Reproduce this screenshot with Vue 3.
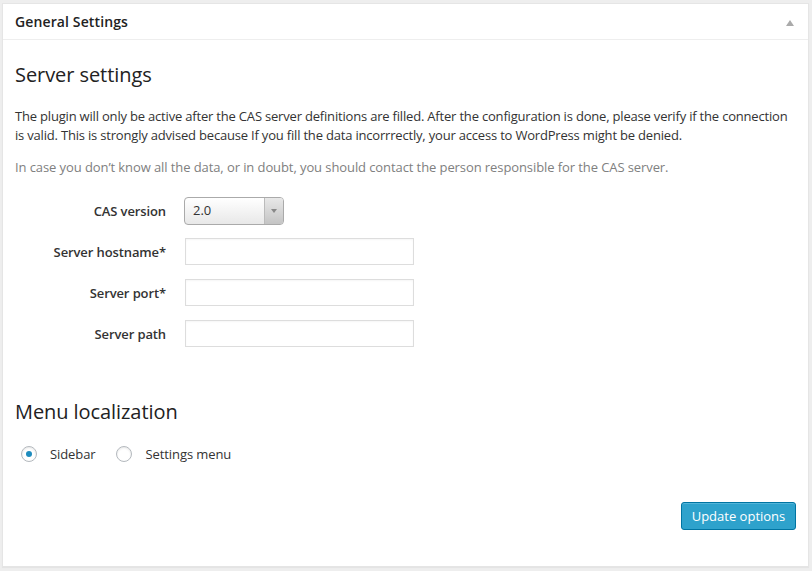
<script setup>
const fields = [
  { label: 'Server hostname*' },
  { label: 'Server port*' },
  { label: 'Server path' },
]
</script>

<template>
  <div class="page">
    <section class="box">
      <header class="box-head">
        <h3>General Settings</h3>
        <span class="arrow"></span>
      </header>
      <div class="box-body">
        <h2 class="first">Server settings</h2>
        <p class="intro">The plugin will only be active after the CAS server definitions are filled. After the configuration is done, please verify if the connection is valid. This is strongly advised because If you fill the data incorrrectly, your access to WordPress might be denied.</p>
        <p class="note">In case you don’t know all the data, or in doubt, you should contact the person responsible for the CAS server.</p>
        <div class="form">
          <div class="row first-row">
            <label>CAS version</label>
            <div class="select">
              <span class="select-value">2.0</span>
              <span class="select-btn"><i></i></span>
            </div>
          </div>
          <div v-for="f in fields" :key="f.label" class="row">
            <label>{{ f.label }}</label>
            <input type="text" class="input" />
          </div>
        </div>
        <h2 class="second">Menu localization</h2>
        <div class="radios">
          <span class="radio on"></span><span class="radio-label">Sidebar</span>
          <span class="radio"></span><span class="radio-label wide">Settings menu</span>
        </div>
        <div class="actions">
          <button class="primary">Update options</button>
        </div>
      </div>
    </section>
  </div>
</template>

<style>
html, body { margin: 0; background: #eeeeee; }
</style>

<style scoped>
.page {
  width: 812px;
  height: 571px;
  box-sizing: border-box;
  padding: 3px 3px 4px 2px;
  background: #eeeeee;
  font-family: "Open Sans", sans-serif;
  color: #333;
  overflow: hidden;
}
.box {
  height: 100%;
  box-sizing: border-box;
  background: #fff;
  border: 1px solid #e5e5e5;
  box-shadow: 0 1px 1px rgba(0, 0, 0, .04);
}
.box-head {
  height: 35px;
  border-bottom: 1px solid #eeeeee;
  display: flex;
  align-items: center;
  justify-content: space-between;
  padding: 0 12px;
}
h3 {
  margin: 0;
  font-size: 14px;
  font-weight: 600;
  letter-spacing: .12px;
  color: #222;
}
.arrow {
  width: 0;
  height: 0;
  border-left: 4px solid transparent;
  border-right: 4px solid transparent;
  border-bottom: 6px solid #aaa;
  margin: 2px 2px 0 0;
}
.box-body { padding: 0 12px; }
h2 {
  margin: 0;
  font-size: 20px;
  font-weight: 400;
  line-height: 27px;
  letter-spacing: -.07px;
  color: #222;
}
.first { padding-top: 21px; }
p {
  margin: 0;
  font-size: 13px;
  line-height: 19px;
  letter-spacing: -.09px;
}
.intro { margin-top: 19px; color: #333; letter-spacing: -.19px; }
.note { margin-top: 13px; color: #808080; }
.form { margin-top: 20px; }
.row {
  display: flex;
  align-items: center;
  height: 27px;
  margin-top: 14px;
}
.first-row { margin-top: 0; height: 28px; margin-bottom: -1px; }
label {
  width: 151px;
  text-align: right;
  font-size: 13px;
  font-weight: 600;
  letter-spacing: -.11px;
  color: #333;
  margin-right: 19px;
  flex: none;
}
.select {
  width: 100px;
  height: 28px;
  box-sizing: border-box;
  margin-left: -1px;
  display: flex;
  border: 1px solid #aaa;
  border-radius: 4px;
  background: linear-gradient(#fff, #e8e8e8);
  overflow: hidden;
  font-size: 13px;
  color: #333;
}
.select-value { flex: 1; padding-left: 8px; line-height: 24px; }
.select-btn {
  width: 18px;
  border-left: 1px solid #bbb;
  background: linear-gradient(#e8e8e8, #c4c4c4);
  display: flex;
  align-items: center;
  justify-content: center;
}
.select-btn i {
  width: 0;
  height: 0;
  border-left: 3px solid transparent;
  border-right: 3px solid transparent;
  border-top: 4px solid #888;
}
.input {
  width: 229px;
  height: 27px;
  box-sizing: border-box;
  border: 1px solid #ddd;
  background: #fff;
  box-shadow: inset 0 1px 2px rgba(0, 0, 0, .04);
  padding: 0;
  margin: 0;
}
.second { margin-top: 51px; }
.radios {
  display: flex;
  align-items: center;
  margin-top: 16px;
  padding-left: 6px;
  height: 26px;
}
.radio {
  width: 16px;
  height: 16px;
  box-sizing: border-box;
  border: 1px solid #b4b9be;
  border-radius: 50%;
  background: #fff;
  box-shadow: inset 0 1px 2px rgba(0, 0, 0, .1);
  display: flex;
  align-items: center;
  justify-content: center;
  flex: none;
}
.radio.on::after {
  content: "";
  width: 6px;
  height: 6px;
  border-radius: 50%;
  background: #1e8cbe;
}
.radio-label {
  font-size: 13px;
  letter-spacing: -.09px;
  color: #333;
  margin-left: 13px;
  margin-right: 20px;
}
.radio-label.wide { margin-left: 14px; }
.actions {
  display: flex;
  justify-content: flex-end;
  margin-top: 35px;
}
.primary {
  width: 115px;
  height: 28px;
  box-sizing: border-box;
  border: 1px solid #0074a2;
  border-radius: 3px;
  background: #2ea2cc;
  color: #fff;
  font-family: inherit;
  font-size: 13px;
  font-weight: 400;
  padding: 0;
  box-shadow: inset 0 1px 0 rgba(120, 200, 230, .5);
}
</style>
